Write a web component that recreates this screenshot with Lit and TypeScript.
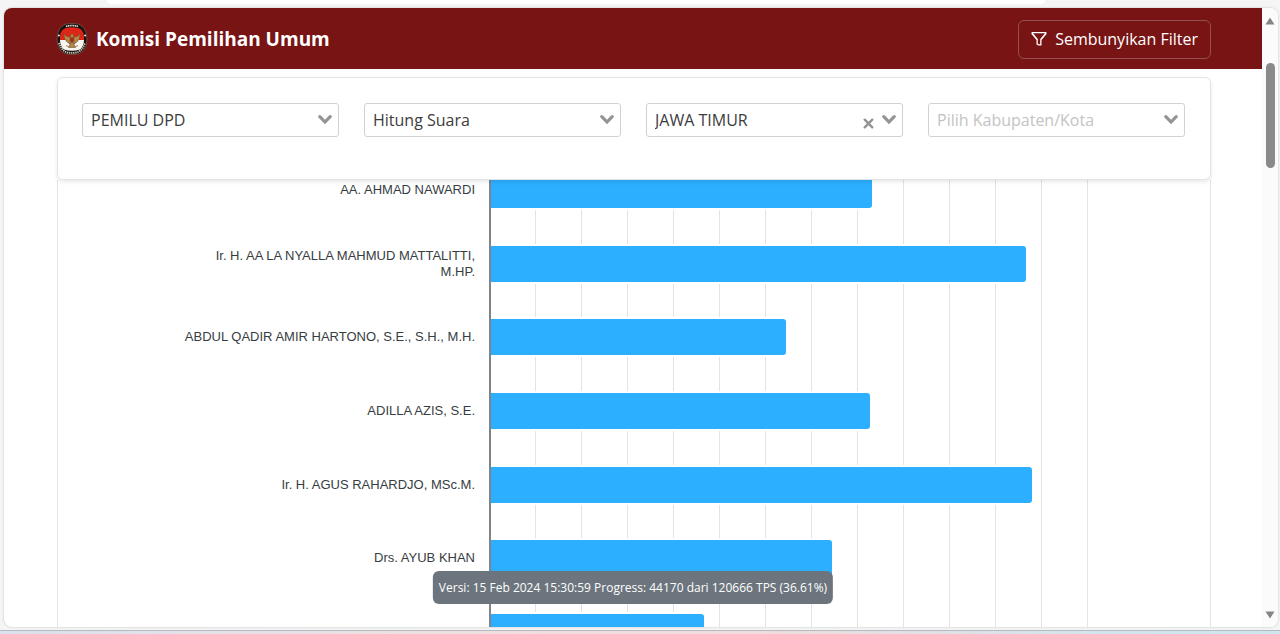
import { LitElement, html, css, nothing } from "lit";
import { customElement, property } from "lit/decorators.js";

interface Candidate {
  name: string;
  share: number;
}

interface Filter {
  id: string;
  label: string;
  value: string;
  clearable?: boolean;
  placeholder?: boolean;
}

const CANDIDATES: Candidate[] = [
  { name: "AA. AHMAD NAWARDI", share: 63.9 },
  { name: "Ir. H. AA LA NYALLA MAHMUD MATTALITTI, M.HP.", share: 89.6 },
  { name: "ABDUL QADIR AMIR HARTONO, S.E., S.H., M.H.", share: 49.5 },
  { name: "ADILLA AZIS, S.E.", share: 63.5 },
  { name: "Ir. H. AGUS RAHARDJO, MSc.M.", share: 90.7 },
  { name: "Drs. AYUB KHAN", share: 57.2 },
  { name: "", share: 35.8 },
];

const FILTERS: Filter[] = [
  { id: "jenis", label: "Jenis pemilu", value: "PEMILU DPD" },
  { id: "tahap", label: "Tahapan", value: "Hitung Suara" },
  { id: "provinsi", label: "Provinsi", value: "JAWA TIMUR", clearable: true },
  { id: "kota", label: "Kabupaten/Kota", value: "Pilih Kabupaten/Kota", placeholder: true },
];

const GRID_STEPS = Array.from({ length: 13 });

@customElement("kpu-logo")
export class KpuLogo extends LitElement {
  static styles = css`
    :host { display: block; width: 32px; height: 32px; }
    svg { display: block; width: 100%; height: 100%; }
  `;

  render() {
    return html`<svg viewBox="0 0 32 32" aria-hidden="true">
      <path d="M9 1.2Q16-.6 23 1.2L27.500 4.500Q31 9 31 16T27.500 27.500L23 30.800Q16 32.400 9 30.800L4.500 27.500Q1 23 1 16T4.500 4.500Z" fill="#17120f" stroke="#8f6a60" stroke-width=".6"/>
      <path d="M4 17V13Q5 6 10 5Q16 3.600 22 5Q27 6 28 13V17Z" fill="#df2418"/>
      <path d="M4 17H28Q28 23 24 26.500Q16 29 8 26.500Q4 23 4 17Z" fill="#f7f3f1"/>
      <g fill="#b08a4c" stroke="#6d4a22" stroke-width=".5">
        <path d="M14.500 14Q9 14 8 10Q7.500 16 11 19L14 21Z"/>
        <path d="M17.500 14Q23 14 24 10Q24.500 16 21 19L18 21Z"/>
        <path d="M16 10.500Q18 11 17.500 14L18 19Q17.500 21 16 21T14 19L14.500 14Q14 11.500 16 10.500Z"/>
        <path d="M14.500 20L12.500 24.500H19.500L17.500 20Z"/>
      </g>
      <path d="M14.300 14.500H17.700V18L16 19.800L14.300 18Z" fill="#a32a1b"/>
      <path d="M10 22.500Q16 26 22 22.500" fill="none" stroke="#9a7d55" stroke-width="1"/>
      <path d="M10 3.400Q16 1.700 22 3.400" fill="none" stroke="#e6dfda" stroke-width="1.600" stroke-dasharray="1.300 .5"/>
      <path d="M3 20Q5 26.500 10 29Q16 30.800 22 29Q27 26.500 29 20" fill="none" stroke="#d5ccc6" stroke-width="1.800" stroke-dasharray="1.300 .8"/>
      <circle cx="2.900" cy="12.500" r=".9" fill="#fff"/>
      <circle cx="29.100" cy="12.500" r=".9" fill="#fff"/>
    </svg>`;
  }
}

@customElement("filter-select")
export class FilterSelect extends LitElement {
  @property({ attribute: false }) filter!: Filter;

  static styles = css`
    :host { display: block; min-width: 0; }
    .field {
      position: relative;
      display: flex;
    }
    .control {
      appearance: none;
      width: 100%;
      height: 34px;
      padding: 0 56px 0 8px;
      border: 1px solid #d2d2d2;
      border-radius: 3px;
      background: #fff;
      color: #3c3c3c;
      font: 16px/24px "Open Sans", "Noto Sans", sans-serif;
    }
    .placeholder { color: #c3c3c3; }
    .actions {
      position: absolute;
      inset: 0 7px 0 auto;
      display: flex;
      align-items: center;
      gap: 8px;
      pointer-events: none;
    }
    .clear {
      display: flex;
      padding: 6px 0 0;
      border: 0;
      background: none;
      pointer-events: auto;
    }
    svg { display: block; fill: none; stroke: #949494; stroke-linecap: round; stroke-linejoin: miter; }
  `;

  render() {
    const f = this.filter;
    return html`<div class="field">
      <select id=${f.id} aria-label=${f.label} class="control ${f.placeholder ? "placeholder" : ""}">
        <option>${f.value}</option>
      </select>
      <div class="actions">
        ${f.clearable
          ? html`<button class="clear" type="button" aria-label="Hapus pilihan">
              <svg width="11" height="11" viewBox="0 0 11 11" stroke-width="2.400"><path d="M1.700 1.700L9.300 9.300M9.300 1.700L1.700 9.300"/></svg>
            </button>`
          : nothing}
        <svg width="14" height="12" viewBox="0 0 14 12" stroke-width="3.200"><path d="M1.800 2.600L7 8L12.200 2.600"/></svg>
      </div>
    </div>`;
  }
}

@customElement("vote-chart")
export class VoteChart extends LitElement {
  @property({ attribute: false }) candidates: Candidate[] = [];

  static styles = css`
    :host { display: block; }
    .chart {
      position: relative;
      display: grid;
      grid-template-rows: repeat(7, 1fr);
      height: 516px;
      margin-top: -27px;
      font: 13px/16px "Liberation Sans", Arial, sans-serif;
      color: #373d3f;
    }
    .row, .grid {
      display: grid;
      grid-template-columns: 432px minmax(0, 1fr);
      padding-right: 122px;
    }
    .row { align-items: center; position: relative; }
    .name {
      padding: 0 15px 0 120px;
      text-align: right;
    }
    .bar {
      height: 36px;
      background: #2caffe;
      border-radius: 0 3px 3px 0;
      box-shadow: 0 0 0 2px #fff;
    }
    .grid {
      position: absolute;
      inset: 0;
    }
    .lines {
      grid-column: 2;
      display: grid;
      grid-template-columns: repeat(13, 1fr);
    }
    .line { border-right: 1px solid #e3e3e3; }
    .axis {
      z-index: 1;
      pointer-events: none;
    }
    .axis-line {
      grid-column: 2;
      border-left: 2px solid #808488;
      margin-left: -1px;
    }
  `;

  render() {
    return html`<div class="chart">
      <div class="grid"><div class="lines">${GRID_STEPS.map(() => html`<div class="line"></div>`)}</div></div>
      ${this.candidates.map(
        (c) => html`<div class="row">
          <div class="name">${c.name}</div>
          <div class="bar" style="width:${c.share}%"></div>
        </div>`
      )}
      <div class="grid axis"><div class="axis-line"></div></div>
    </div>`;
  }
}

@customElement("app-root")
export class AppRoot extends LitElement {
  static styles = css`
    :host {
      display: block;
      font-family: "Open Sans", "Noto Sans", sans-serif;
    }
    .shell {
      box-sizing: border-box;
      display: flex;
      flex-direction: column;
      height: 100vh;
      background: #f5f5f5;
    }
    .toolbar {
      flex: none;
      height: 8px;
      padding: 0 235px 0 107px;
    }
    .address {
      height: 4px;
      background: #fff;
      border-radius: 0 0 12px 12px;
    }
    .window {
      flex: 1;
      min-height: 0;
      display: flex;
      margin: 0 2px 0 4px;
      border-radius: 8px;
      overflow: hidden;
      background: #fff;
      box-shadow: 0 0 2px #b5b5b5;
    }
    .page {
      position: relative;
      flex: 1;
      min-width: 0;
      display: flex;
      flex-direction: column;
    }
    .header {
      flex: none;
      box-sizing: border-box;
      display: flex;
      align-items: center;
      justify-content: space-between;
      height: 61px;
      padding: 1px 51px 0 52px;
      background: #781414;
      color: #fff;
    }
    .brand {
      display: flex;
      align-items: center;
      gap: 8px;
      margin: 0;
      font-size: 19px;
      line-height: 28px;
      font-weight: 700;
    }
    .toggle {
      display: flex;
      align-items: center;
      gap: 8px;
      height: 39px;
      padding: 0 12px;
      border: 1px solid #935050;
      border-radius: 6px;
      background: none;
      color: #fff;
      font: 16px "Open Sans", "Noto Sans", sans-serif;
    }
    .content {
      flex: 1;
      min-height: 0;
      display: flex;
      flex-direction: column;
      padding: 8px 51px 0 53px;
    }
    .filters {
      flex: none;
      position: relative;
      z-index: 2;
      display: grid;
      grid-template-columns: repeat(4, minmax(0, 1fr));
      gap: 25px;
      padding: 25px 25px 42px 24px;
      border: 1px solid #e2e5e8;
      border-radius: 6px;
      background: #fff;
      box-shadow: 0 2px 4px rgba(0, 0, 0, 0.09);
    }
    .panel {
      flex: 1;
      min-height: 0;
      overflow: hidden;
      border: 1px solid #e2e4e6;
      border-width: 0 1px;
    }
    .status {
      position: absolute;
      bottom: 23px;
      left: 50%;
      transform: translateX(-50%);
      z-index: 3;
      padding: 8px 6px;
      border-radius: 6px;
      background: #6c757d;
      color: #fff;
      font-size: 12px;
      line-height: 17px;
      white-space: nowrap;
    }
    .scroll {
      flex: none;
      box-sizing: border-box;
      display: flex;
      flex-direction: column;
      align-items: center;
      width: 16px;
      padding: 9px 0 8px;
      background: #fbfbfb;
    }
    .arrow { display: block; fill: #858585; }
    .thumb {
      width: 9px;
      height: 105px;
      margin: 38px 0 auto;
      border-radius: 5px;
      background: #8a8a8a;
    }
    .taskbar {
      flex: none;
      height: 3px;
      margin-top: 3px;
      border-top: 1px solid #b3b9bf;
      background: linear-gradient(90deg, #d9e2ee, #f0dfe0 35%, #efdcdc 60%, #d3e5ee 85%, #cfe5ee);
    }
  `;

  render() {
    return html`<div class="shell">
      <div class="toolbar"><div class="address"></div></div>
      <div class="window">
        <div class="page">
          <header class="header">
            <h1 class="brand"><kpu-logo></kpu-logo>Komisi Pemilihan Umum</h1>
            <button class="toggle" type="button">
              <svg width="16" height="16" viewBox="0 0 16 16" fill="#fff" aria-hidden="true">
                <path d="M.5 1.500A.5.500 0 0 1 1 1h14a.5.500 0 0 1 .5.500v1.500a.5.500 0 0 1-.128.334L10.500 9V14a.5.500 0 0 1-.5.500H7.500L5.500 13.500V9L.628 3.334A.5.500 0 0 1 .5 3zM2 2.300L6.800 8.100V12.700L7.900 13.300H9.200V8.100L14 2.300z" fill-rule="evenodd"/>
              </svg>
              Sembunyikan Filter
            </button>
          </header>
          <main class="content">
            <section class="filters">
              ${FILTERS.map((f) => html`<filter-select .filter=${f}></filter-select>`)}
            </section>
            <section class="panel"><vote-chart .candidates=${CANDIDATES}></vote-chart></section>
          </main>
          <div class="status" role="status">Versi: 15 Feb 2024 15:30:59 Progress: 44170 dari 120666 TPS (36.61%)</div>
        </div>
        <div class="scroll" aria-hidden="true">
          <svg class="arrow" width="10" height="8" viewBox="0 0 10 8"><path d="M5 .5L9.500 7.500H.5Z"/></svg>
          <div class="thumb"></div>
          <svg class="arrow" width="10" height="8" viewBox="0 0 10 8"><path d="M5 7.500L.5 .5H9.500Z"/></svg>
        </div>
      </div>
      <div class="taskbar"></div>
    </div>`;
  }
}
